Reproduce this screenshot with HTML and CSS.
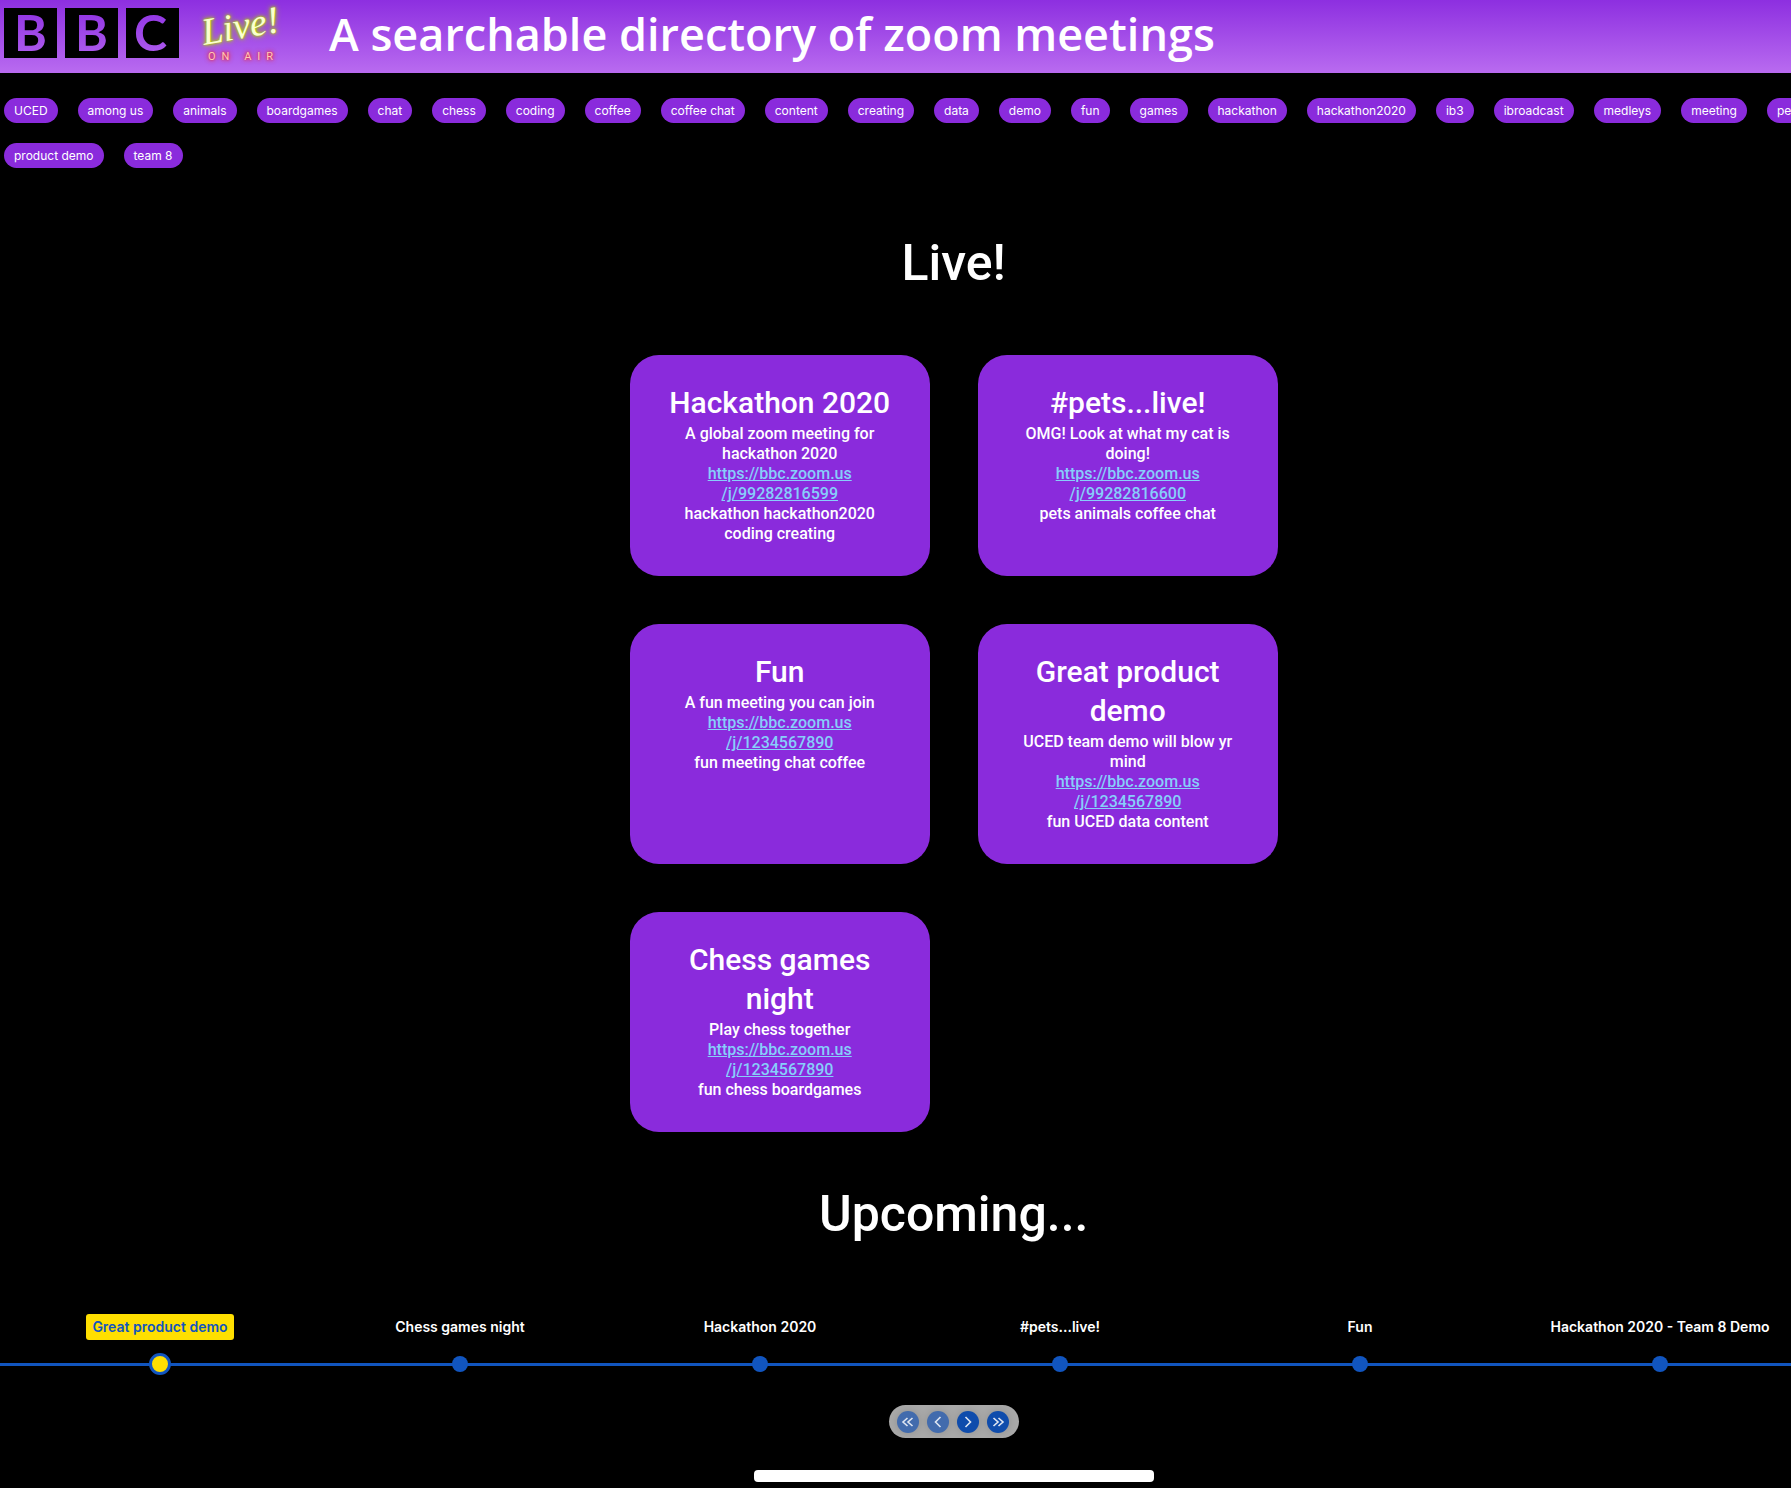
FILE: index.html
```html
<!DOCTYPE html>
<html lang="en">
<head>
<meta charset="utf-8">
<meta name="viewport" content="width=device-width, initial-scale=1">
<title>BBC Live! A searchable directory of zoom meetings</title>
<link rel="stylesheet" href="styles.css">
</head>
<body>
<header class="masthead">
  <svg class="bbc" width="175" height="50" viewBox="0 0 175 50" role="img" aria-label="BBC">
    <defs>
      <linearGradient id="sky" gradientUnits="userSpaceOnUse" x1="0" y1="-8" x2="0" y2="65">
        <stop offset="0" stop-color="#8a2be2"/>
        <stop offset="1" stop-color="#b96bf0"/>
      </linearGradient>
    </defs>
    <path d="M0 0h53v50H0zM61 0h53v50H61zM122 0h53v50h-53z"/>
    <g class="bbc-letters" fill="url(#sky)">
      <text x="10" y="43">B</text>
      <text x="71" y="43">B</text>
      <text x="130" y="43">C</text>
    </g>
  </svg>
  <svg class="sign" width="90" height="64" viewBox="0 0 90 64" role="img" aria-label="Live! On air">
    <text class="sign-live" x="7" y="45" transform="rotate(-10 7 45)">Live!</text>
    <text class="sign-air" x="11" y="60">ON AIR</text>
  </svg>
  <h1 class="title">A searchable directory of zoom meetings</h1>
</header>
<main class="page">
  <nav class="tags" aria-label="Tags">
    <button class="tag">UCED</button>
    <button class="tag">among us</button>
    <button class="tag">animals</button>
    <button class="tag">boardgames</button>
    <button class="tag">chat</button>
    <button class="tag">chess</button>
    <button class="tag">coding</button>
    <button class="tag">coffee</button>
    <button class="tag">coffee chat</button>
    <button class="tag">content</button>
    <button class="tag">creating</button>
    <button class="tag">data</button>
    <button class="tag">demo</button>
    <button class="tag">fun</button>
    <button class="tag">games</button>
    <button class="tag">hackathon</button>
    <button class="tag">hackathon2020</button>
    <button class="tag">ib3</button>
    <button class="tag">ibroadcast</button>
    <button class="tag">medleys</button>
    <button class="tag">meeting</button>
    <button class="tag">pets</button>
    <button class="tag">product demo</button>
    <button class="tag">team 8</button>
  </nav>
  <h2 class="heading">Live!</h2>
  <section class="cards">
    <article class="card">
      <h3>Hackathon 2020</h3>
      <p>A global zoom meeting for hackathon 2020</p>
      <a href="https://bbc.zoom.us/j/99282816599">https://bbc.zoom.us<wbr>/j/99282816599</a>
      <p>hackathon hackathon2020 coding creating</p>
    </article>
    <article class="card">
      <h3>#pets...live!</h3>
      <p>OMG! Look at what my cat is doing!</p>
      <a href="https://bbc.zoom.us/j/99282816600">https://bbc.zoom.us<wbr>/j/99282816600</a>
      <p>pets animals coffee chat</p>
    </article>
    <article class="card">
      <h3>Fun</h3>
      <p>A fun meeting you can join</p>
      <a href="https://bbc.zoom.us/j/1234567890">https://bbc.zoom.us<wbr>/j/1234567890</a>
      <p>fun meeting chat coffee</p>
    </article>
    <article class="card">
      <h3>Great product demo</h3>
      <p>UCED team demo will blow yr mind</p>
      <a href="https://bbc.zoom.us/j/1234567890">https://bbc.zoom.us<wbr>/j/1234567890</a>
      <p>fun UCED data content</p>
    </article>
    <article class="card">
      <h3>Chess games night</h3>
      <p>Play chess together</p>
      <a href="https://bbc.zoom.us/j/1234567890">https://bbc.zoom.us<wbr>/j/1234567890</a>
      <p>fun chess boardgames</p>
    </article>
  </section>
  <h2 class="heading">Upcoming...</h2>
  <ol class="timeline">
    <li class="event current"><a href="#e1">Great product demo</a><span class="dot"></span></li>
    <li class="event"><a href="#e2">Chess games night</a><span class="dot"></span></li>
    <li class="event"><a href="#e3">Hackathon 2020</a><span class="dot"></span></li>
    <li class="event"><a href="#e4">#pets...live!</a><span class="dot"></span></li>
    <li class="event"><a href="#e5">Fun</a><span class="dot"></span></li>
    <li class="event"><a href="#e6">Hackathon 2020 - Team 8 Demo</a><span class="dot"></span></li>
  </ol>
  <div class="pager">
    <button aria-label="First" disabled><svg width="22" height="22" viewBox="0 0 22 22"><path d="M10.500 7l-4.500 4 4.500 4M15.500 7l-4.500 4 4.500 4"/></svg></button>
    <button aria-label="Previous" disabled><svg width="22" height="22" viewBox="0 0 22 22"><path d="M13.500 6l-5 5 5 5"/></svg></button>
    <button aria-label="Next"><svg width="22" height="22" viewBox="0 0 22 22"><path d="M8.500 6l5 5-5 5"/></svg></button>
    <button aria-label="Last"><svg width="22" height="22" viewBox="0 0 22 22"><path d="M6.500 7l4.500 4-4.500 4M11.500 7l4.500 4-4.500 4"/></svg></button>
  </div>
  <div class="panel"></div>
</main>
</body>
</html>
```
FILE: styles.css
```css
* {
  box-sizing: border-box;
}

body {
  margin: 0;
  background: #000;
  color: #fff;
  font-family: Roboto, "Open Sans", sans-serif;
  overflow-x: hidden;
}

h1, h2, h3, p, ol {
  margin: 0;
  padding: 0;
}

.masthead {
  display: flex;
  align-items: flex-start;
  height: 73px;
  padding-left: 4px;
  background: linear-gradient(#8d2fe0, #b96bf0);
}

.bbc {
  flex: none;
  margin-top: 8px;
}

.bbc-letters {
  font: 700 50px Lato, sans-serif;
}

.sign {
  flex: none;
  margin-left: 18px;
  overflow: visible;
}

.sign-live {
  font: italic 38px "Liberation Serif", serif;
  fill: #fbffd0;
  text-shadow: 0 0 2px #b4e000, 0 0 4px #a8d000, 0 0 6px #a8d000;
}

.sign-air {
  font: 400 11px Roboto, sans-serif;
  letter-spacing: 6px;
  fill: #ffc9b8;
  text-shadow: 0 0 2px #e0304c, 0 0 4px #e0304c, 0 0 5px #e0304c;
}

.title {
  margin-left: 42px;
  font: 600 45px/68px "Open Sans", sans-serif;
  white-space: nowrap;
}

/* The page body is a little wider than the window and runs off its right edge. */
.page {
  width: 106.5vw;
}

.tags {
  display: flex;
  flex-wrap: wrap;
  gap: 20px;
  padding: 25px 0 13px 4px;
}

.tag {
  height: 25px;
  padding: 0 10px;
  border: 0;
  border-radius: 13px;
  background: #8a2bdc;
  color: #fff;
  font: 12px/25px Inter, sans-serif;
}

.heading {
  padding: 50px 0 59px;
  font-size: 50px;
  font-weight: 500;
  line-height: 65px;
  text-align: center;
}

.cards {
  display: grid;
  grid-template-columns: 300px 300px;
  justify-content: center;
  gap: 48px;
}

.card {
  padding: 28px 31px 32px;
  border-radius: 29px;
  background: #8a2bdc;
  font-size: 16px;
  font-weight: 500;
  line-height: 20px;
  text-align: center;
}

.card h3 {
  padding-bottom: 2px;
  font-size: 30px;
  font-weight: 500;
  line-height: 39px;
}

.card a {
  display: inline-block;
  width: 160px;
  color: #87cefa;
  vertical-align: top;
}

.timeline {
  display: flex;
  margin-top: 8px;
  padding-left: 10px;
  list-style: none;
  background: linear-gradient(#1155bf, #1155bf) 0 49px / 100% 3px no-repeat;
}

.event {
  display: flex;
  flex: none;
  flex-direction: column;
  align-items: center;
  width: 300px;
  height: 62px;
}

.event a {
  padding: 0 6px;
  border-radius: 3px;
  color: #fff;
  font: 600 14px/26px Inter, sans-serif;
  text-decoration: none;
}

.dot {
  width: 16px;
  height: 16px;
  margin-top: 16px;
  border-radius: 50%;
  background: #1155bf;
}

.current a {
  background: #ffdf00;
  color: #1155bf;
}

.current .dot {
  width: 22px;
  height: 22px;
  margin-top: 13px;
  border: 3px solid #1155bf;
  background: #ffdf00;
}

.pager {
  display: flex;
  gap: 8px;
  width: 130px;
  margin: 29px auto 32px;
  padding: 6px 8px 5px;
  border-radius: 17px;
  background: #a9a9a9;
}

.pager button {
  width: 22px;
  height: 22px;
  padding: 0;
  border: 0;
  border-radius: 50%;
  background: #0f4cac;
  box-shadow: 0 0 8px rgba(0, 0, 0, 0.15);
}

.pager button:disabled {
  background: #426bad;
}

.pager svg {
  display: block;
  fill: none;
  stroke: #dfe6f2;
  stroke-width: 1.600;
}

.panel {
  width: 400px;
  height: 12px;
  margin: 0 auto 7px;
  border-radius: 4px;
  background: #fff;
}
```
